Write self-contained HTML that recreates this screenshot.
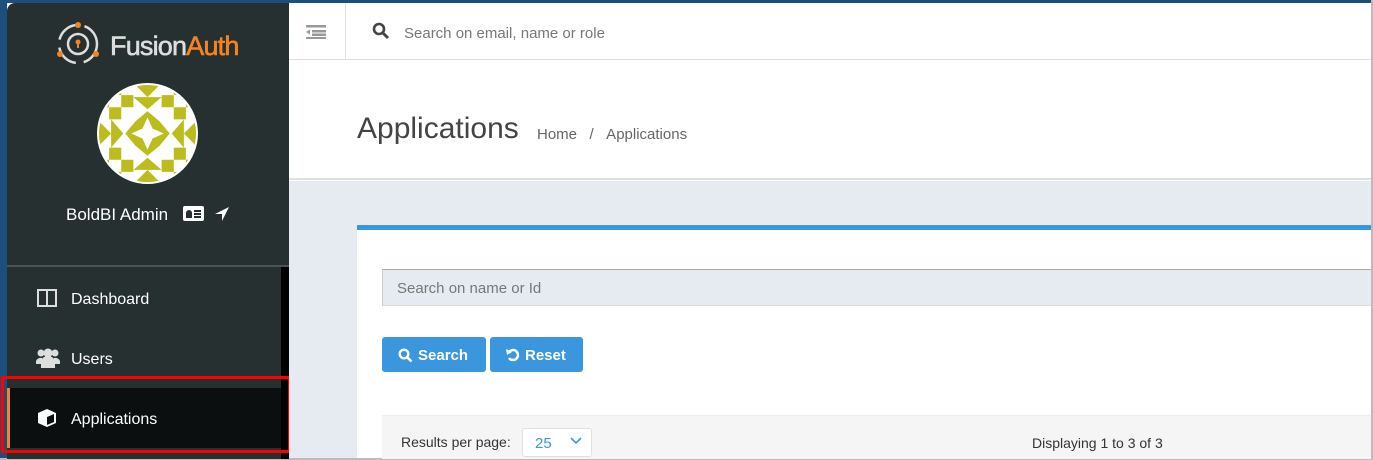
<!DOCTYPE html>
<html><head><style>
*{margin:0;padding:0;box-sizing:border-box}
body{width:1373px;height:460px;overflow:hidden;background:#fff;font-family:"Liberation Sans",sans-serif;position:relative}
.abs{position:absolute}
</style></head><body>
<div class="abs" style="left:0;top:0;width:1373px;height:3px;background:#1d4f7c"></div>
<div class="abs" style="left:0;top:0;width:7px;height:460px;background:#1d4f7c"></div>
<div class="abs" style="left:1371px;top:0;width:2px;height:460px;background:#bbb"></div>
<div class="abs" style="left:0;top:458px;width:1373px;height:2px;background:#bbb"></div>

<!-- sidebar -->
<div class="abs" style="left:7px;top:3px;width:282px;height:456px;background:#263031;border-top-left-radius:8px"></div>
<div class="abs" style="left:7px;top:265px;width:282px;height:2px;background:#4a5253"></div>
<div class="abs" style="left:281px;top:267px;width:8px;height:192px;background:#000"></div>
<svg class="abs" style="left:56px;top:22px" width="44" height="44" viewBox="0 0 44 44">
<circle cx="22" cy="22" r="19" fill="none" stroke="#ddd" stroke-width="2.5" stroke-dasharray="24 8"/>
<circle cx="22" cy="22" r="10" fill="none" stroke="#ddd" stroke-width="2.5"/>
<circle cx="22" cy="20" r="2.5" fill="#f58320"/><rect x="21" y="21" width="2" height="5" fill="#f58320"/>
<circle cx="22" cy="3" r="3" fill="#f58320"/><circle cx="4" cy="32" r="3" fill="#f58320"/><circle cx="40" cy="32" r="3" fill="#f58320"/>
</svg>
<div class="abs" style="left:110px;top:31px;font-size:27px;color:#ddd;letter-spacing:-0.8px;-webkit-text-stroke:0.6px #ddd">Fusion<span style="color:#f58320;-webkit-text-stroke:0.6px #f58320">Auth</span></div>
<svg class="abs" style="left:97px;top:83px" width="101" height="101" viewBox="0 0 100 100">
<defs><clipPath id="c"><circle cx="50" cy="50" r="49"/></clipPath></defs>
<g clip-path="url(#c)"><rect width="100" height="100" fill="#fff"/>
<g fill="#bcbc1e">
<rect x="0" y="12" width="12" height="12"/><rect x="88" y="12" width="12" height="12"/><rect x="0" y="76" width="12" height="12"/><rect x="88" y="76" width="12" height="12"/>
<rect x="12" y="0" width="12" height="12"/><rect x="76" y="0" width="12" height="12"/><rect x="12" y="88" width="12" height="12"/><rect x="76" y="88" width="12" height="12"/>
<rect x="12" y="24" width="12" height="12"/><rect x="76" y="24" width="12" height="12"/><rect x="12" y="64" width="12" height="12"/><rect x="76" y="64" width="12" height="12"/>
<rect x="24" y="12" width="12" height="12"/><rect x="64" y="12" width="12" height="12"/><rect x="24" y="76" width="12" height="12"/><rect x="64" y="76" width="12" height="12"/>
<polygon points="36,0 64,0 50,14"/><polygon points="36,100 64,100 50,86"/><polygon points="0,36 0,64 14,50"/><polygon points="100,36 100,64 86,50"/>
<polygon points="36,14 64,14 50,26"/><polygon points="36,86 64,86 50,74"/><polygon points="14,36 14,64 26,50"/><polygon points="86,36 86,64 74,50"/>
<polygon points="38,38 50,28 62,38 72,50 62,62 50,72 38,62 28,50"/>
<polygon points="50,34 55,45 66,50 55,55 50,66 45,55 34,50 45,45" fill="#fff"/>
</g></g>
<circle cx="50" cy="50" r="49" fill="none" stroke="#fff" stroke-width="2"/>
</svg>
<div class="abs" style="left:66px;top:205px;font-size:17px;color:#fff">BoldBI Admin</div>
<div class="abs" style="left:183px;top:206px;width:21px;height:15px;background:#fff;border-radius:2px"><div style="position:absolute;left:3px;top:4px;width:6px;height:8px;background:#263031;border-radius:3px 3px 0 0"></div><div style="position:absolute;left:11px;top:4px;width:7px;height:2px;background:#263031;box-shadow:0 3px 0 #263031,0 6px 0 #263031"></div></div>
<svg class="abs" style="left:214px;top:206px" width="16" height="16" viewBox="0 0 16 16"><polygon points="15,1 1,8 8,8 8,15" fill="#fff"/></svg>
<svg class="abs" style="left:37px;top:289px" width="20" height="18"><rect x="1" y="1" width="18" height="16" fill="none" stroke="#ddd" stroke-width="2"/><line x1="10" y1="1" x2="10" y2="17" stroke="#ddd" stroke-width="2"/></svg>
<div class="abs" style="left:71px;top:291px;font-size:16px;color:#fff">Dashboard</div>
<svg class="abs" style="left:36px;top:347px" width="24" height="22"><circle cx="12" cy="6" r="4.5" fill="#ddd"/><circle cx="5" cy="6" r="3.5" fill="#ddd"/><circle cx="19" cy="6" r="3.5" fill="#ddd"/><path d="M5 21v-6a7 6 0 0 1 14 0v6z" fill="#ddd"/><path d="M0 17v-3a5 4 0 0 1 6-3v6zM24 17v-3a5 4 0 0 0-6-3v6z" fill="#ddd"/></svg>
<div class="abs" style="left:71px;top:351px;font-size:16px;color:#fff">Users</div>
<div class="abs" style="left:7px;top:388px;width:274px;height:60px;background:#0b0f10"></div>
<div class="abs" style="left:7px;top:388px;width:3px;height:60px;background:#f58320"></div>
<svg class="abs" style="left:37px;top:408px" width="20" height="20" viewBox="0 0 20 20"><polygon points="10,1 19,5 19,15 10,19 1,15 1,5" fill="#fff"/><polygon points="10,9 17,6 17,14 10,17" fill="#0b0f10"/></svg>
<div class="abs" style="left:71px;top:411px;font-size:16px;color:#fff">Applications</div>
<div class="abs" style="left:1px;top:376px;width:290px;height:77px;border:3px solid #f00"></div>

<!-- topbar -->
<div class="abs" style="left:289px;top:3px;width:1082px;height:57px;background:#fff;border-bottom:1px solid #ddd"></div>
<div class="abs" style="left:345px;top:3px;width:1px;height:56px;background:#e3e3e3"></div>
<svg class="abs" style="left:306px;top:25px" width="20" height="14"><g fill="#999"><rect x="0" y="0" width="20" height="2.5"/><rect x="6" y="5" width="14" height="2.5"/><rect x="6" y="9" width="14" height="2.5" transform="translate(0,-0.5)"/><rect x="0" y="12" width="20" height="2"/><polygon points="0,7 4,4.5 4,9.5"/></g></svg>
<svg class="abs" style="left:372px;top:22px" width="18" height="18"><circle cx="7" cy="7" r="5" fill="none" stroke="#444" stroke-width="2.6"/><line x1="10.5" y1="10.5" x2="16" y2="16" stroke="#444" stroke-width="3"/></svg>
<div class="abs" style="left:404px;top:25px;font-size:15px;color:#777">Search on email, name or role</div>

<!-- header -->
<div class="abs" style="left:289px;top:60px;width:1082px;height:120px;background:#fff;border-bottom:2px solid #e0e0e0"></div>
<div class="abs" style="left:357px;top:112px;font-size:30px;color:#444">Applications</div>
<div class="abs" style="left:537px;top:126px;font-size:15px;color:#666">Home &nbsp;&nbsp;/&nbsp;&nbsp;&nbsp;Applications</div>

<div class="abs" style="left:289px;top:181px;width:1082px;height:277px;background:#e6ebf2"></div>
<!-- card -->
<div class="abs" style="left:357px;top:225px;width:1014px;height:233px;background:#fff;border-top:5px solid #3b97dd"></div>
<div class="abs" style="left:382px;top:269px;width:989px;height:37px;background:#e6ebf2;border-top:1px solid #aaa;border-left:1px solid #ccc;border-bottom:1px solid #ddd"></div>
<div class="abs" style="left:397px;top:280px;font-size:15px;color:#777">Search on name or Id</div>
<div class="abs" style="left:382px;top:337px;width:104px;height:35px;background:#3b97dd;border-radius:3px;color:#fff;font-weight:bold;font-size:15px;line-height:37px;padding-left:36px">Search</div>
<svg class="abs" style="left:398px;top:348px" width="15" height="15"><circle cx="6" cy="6" r="4.3" fill="none" stroke="#fff" stroke-width="2.4"/><line x1="9" y1="9" x2="13.5" y2="13.5" stroke="#fff" stroke-width="2.6"/></svg>
<div class="abs" style="left:490px;top:337px;width:93px;height:35px;background:#3b97dd;border-radius:3px;color:#fff;font-weight:bold;font-size:15px;line-height:37px;padding-left:35px">Reset</div>
<svg class="abs" style="left:506px;top:348px" width="14" height="14"><path d="M3 4 A5 5 0 1 1 3 10" fill="none" stroke="#fff" stroke-width="2.4"/><polygon points="0,1 6,4 1,7" fill="#fff"/></svg>
<div class="abs" style="left:382px;top:415px;width:989px;height:44px;background:#f5f5f5;border-top:1px solid #eee"></div>
<div class="abs" style="left:401px;top:434px;font-size:14px;color:#333">Results per page:</div>
<div class="abs" style="left:522px;top:428px;width:70px;height:29px;background:#fff;border:1px solid #e0e0e0;border-radius:3px;color:#3b97dd;font-size:15px;line-height:29px;padding-left:12px">25</div>
<svg class="abs" style="left:570px;top:437px" width="12" height="8"><polyline points="1,1 6,6 11,1" fill="none" stroke="#3b97dd" stroke-width="1.6"/></svg>
<div class="abs" style="left:1032px;top:435px;font-size:14px;color:#333">Displaying 1 to 3 of 3</div>
</body></html>
